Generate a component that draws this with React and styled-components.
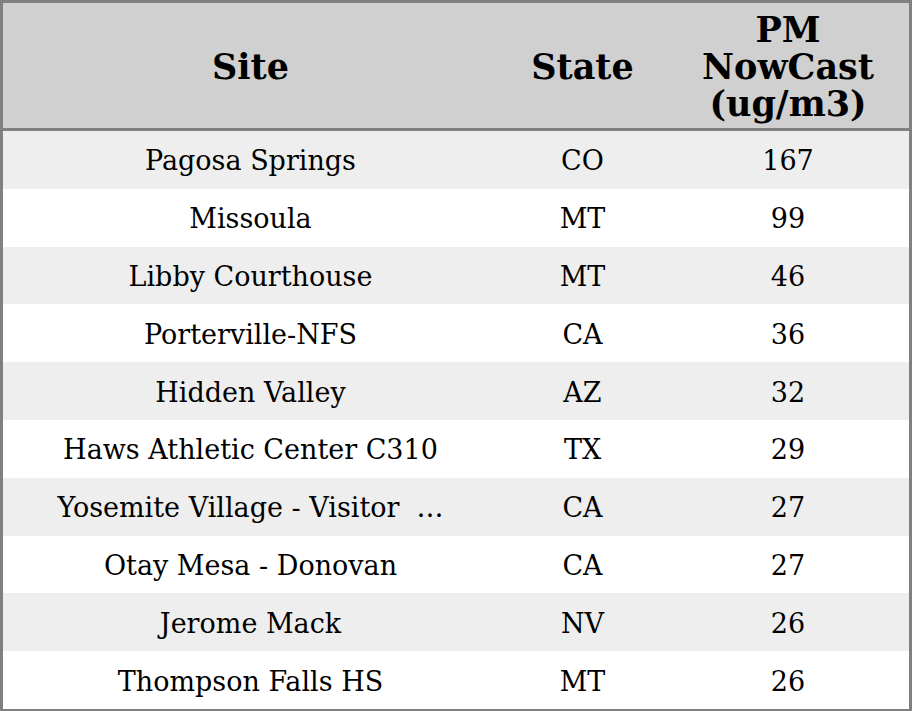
import React from 'react';
import styled, { createGlobalStyle } from 'styled-components';

const GlobalStyle = createGlobalStyle`
  html, body {
    margin: 0;
    padding: 0;
    background: #ffffff;
  }
`;

const Frame = styled.div`
  width: 912px;
  height: 711px;
  box-sizing: border-box;
  border: 3px solid #808080;
  border-bottom-width: 2px;
  display: flex;
  flex-direction: column;
  font-family: "DejaVu Serif", serif;
  color: #000000;
`;

const Row = styled.div`
  display: grid;
  grid-template-columns: 495px 169px 1fr;
  align-items: center;
  flex: 1;
  background: ${(p) => p.$bg};
`;

const HeadRow = styled(Row)`
  flex: 0 0 125px;
  border-bottom: 3px solid #808080;
`;

const HeadCell = styled.div`
  text-align: center;
  font-weight: bold;
  font-size: 35px;
  line-height: 37px;
  padding-top: 2px;
`;

const Cell = styled.div`
  text-align: center;
  font-size: 27px;
  white-space: pre;
  overflow: hidden;
  padding-top: 2px;
`;

const rows = [
  ['Pagosa Springs', 'CO', '167'],
  ['Missoula', 'MT', '99'],
  ['Libby Courthouse', 'MT', '46'],
  ['Porterville-NFS', 'CA', '36'],
  ['Hidden Valley', 'AZ', '32'],
  ['Haws Athletic Center C310', 'TX', '29'],
  ['Yosemite Village - Visitor  …', 'CA', '27'],
  ['Otay Mesa - Donovan', 'CA', '27'],
  ['Jerome Mack', 'NV', '26'],
  ['Thompson Falls HS', 'MT', '26'],
];

export default function App() {
  return (
    <>
      <GlobalStyle />
      <Frame>
        <HeadRow $bg="#d0d0d0">
          <HeadCell>Site</HeadCell>
          <HeadCell>State</HeadCell>
          <HeadCell>
            PM
            <br />
            NowCast
            <br />
            (ug/m3)
          </HeadCell>
        </HeadRow>
        {rows.map((r, i) => (
          <Row key={i} $bg={i % 2 === 0 ? '#eeeeee' : '#ffffff'}>
            <Cell>{r[0]}</Cell>
            <Cell>{r[1]}</Cell>
            <Cell>{r[2]}</Cell>
          </Row>
        ))}
      </Frame>
    </>
  );
}
